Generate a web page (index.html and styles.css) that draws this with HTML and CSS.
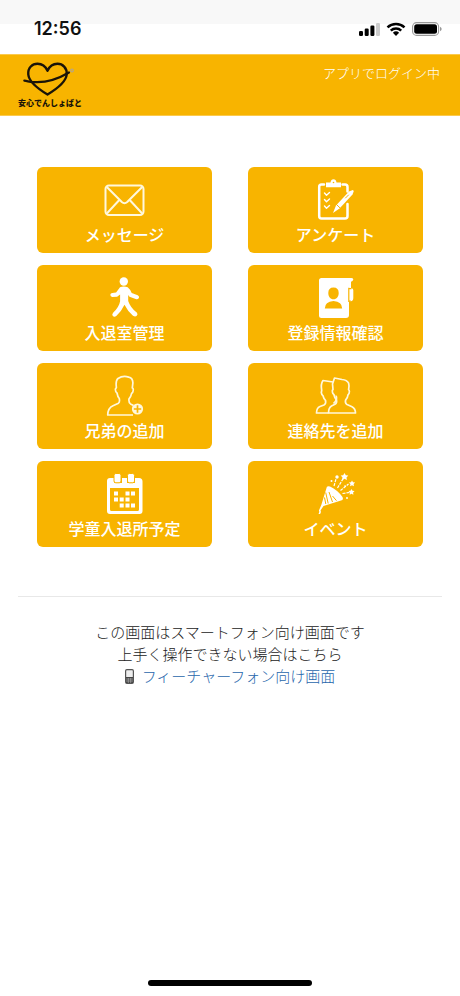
FILE: index.html
```html
<!DOCTYPE html>
<html lang="ja">
<head>
<meta charset="utf-8">
<meta name="viewport" content="width=device-width, initial-scale=1">
<title>安心でんしょばと</title>
<link rel="stylesheet" href="styles.css">
</head>
<body>
<div class="status">
  <time class="clock">12:56</time>
  <div class="indicators">
    <svg width="21" height="14" viewBox="0 0 21 14" aria-hidden="true"><rect y="9" width="4" height="5" rx="1.2"/><rect x="5.7" y="6.5" width="4" height="7.5" rx="1.2"/><rect x="11.4" y="3.5" width="4" height="10.5" rx="1.2"/><rect x="17" y="1" width="4" height="13" rx="1.2" fill="#ccc"/></svg>
    <svg width="20" height="14" viewBox="0 0 20 14" aria-hidden="true"><g fill="none" stroke="#000" stroke-width="2.5"><path d="M1.500 5.300a12.300 12.300 0 0 1 17 0"/><path d="M4.800 8.600a7.500 7.500 0 0 1 10.400 0"/></g><path d="M10 14 6.900 10.800a4.500 4.500 0 0 1 6.200 0z"/></svg>
    <svg width="30" height="14" viewBox="0 0 30 14" aria-hidden="true"><rect x=".6" y=".6" width="26" height="12.8" rx="4" fill="none" stroke="#999" stroke-width="1.1"/><rect x="2.2" y="2.2" width="22.8" height="9.6" rx="2.5"/><path d="M28 4.700q1.700.7 1.700 2.300T28 9.300z" fill="#999"/></svg>
  </div>
</div>
<header class="header">
  <a class="brand" href="#">
    <svg width="52" height="35" viewBox="0 0 52 35" fill="none" stroke="#1a1408" stroke-linecap="round" stroke-linejoin="round" aria-hidden="true"><path stroke-width="2.4" d="M24.500 32.500C14.500 26.500 6 20 5.300 12.500 4.700 5.500 9.500 1.800 14.500 1.800c4.500 0 8 2.600 10 7 2-4.400 5.500-7 10-7 5 0 9.700 3.800 9.200 10.700C43 20 34.500 26.500 24.500 32.500z"/><path stroke-width="2.2" d="M1.300 18.700c4 .4 5 1.400 12 1.500C25 20.400 35 17 46 10.500"/><circle cx="49" cy="8.500" r="1.300" stroke="#b8a682" stroke-width="1.3"/></svg>
    <span class="brand-name">安心でんしょばと</span>
  </a>
  <p class="session">アプリでログイン中</p>
</header>
<main class="main">
  <nav class="menu">
    <a class="tile" href="#">
      <svg class="icon" viewBox="1 0 42 42" fill="none" stroke="#fff8dc" stroke-width="2" stroke-linejoin="round"><rect x="2.5" y="6.500" width="38" height="29.5" rx="3.5"/><path d="M3.800 8l15 15q2.700 2.400 5.400 0l15-15M3.800 34.500 16.300 21M39.200 34.500 26.700 21"/></svg>
      <span>メッセージ</span>
    </a>
    <a class="tile" href="#">
      <svg class="icon" viewBox="2 0 42 42" fill="none" stroke="#fff" stroke-linecap="round" stroke-linejoin="round"><path stroke-width="2.5" d="M11 5.500H8.500Q6.200 5.500 6.200 7.800V37q0 2.500 2.300 2.500h23.500q2.500 0 2.500-2.500V25M29.500 5.500h2.500q2.500 0 2.500 2.500v4.500"/><path fill="#fff" stroke="none" d="M13 3.500h4.500q.5-3.300 3-3.300t3 3.300H28v4.800H13z"/><circle cx="20.500" cy="3.500" r=".8" fill="#f8b400" stroke="none"/><path stroke-width="1.4" d="M11.500 14l2 2.200 3-2.700M11.500 20.500l2 2.200 3-2.700M11.500 27l2 2.200 3-2.700"/><path fill="#fff" stroke="none" d="M20 34l3-7.500L36 12.500l3.800-1.500 1 1-1.300 3.500L26.500 29.500z"/><path stroke="#f8b400" stroke-width="1" d="M23.500 25.500l3.500 3.400M32.500 19l3-3"/></svg>
      <span>アンケート</span>
    </a>
    <a class="tile" href="#">
      <svg class="icon" viewBox="1 0 42 42" fill="#fff"><circle cx="20.800" cy="4.500" r="4.200"/><path d="M17 10.200q3.700-1.500 7.700 0 2.300 1.800 4 5.700l6 2.300q2.200 1.300.8 3.400-1 1-2.800.4l-6.200-2.300-1.300-1.700v6q2.300 7 8.800 11.700 1.200 2-.5 3.300-1.500 1-3.500-.3-5.500-4.700-8.500-11-3 6.500-8.200 11.300-2 1.400-3.500 0-1.200-1.600.3-3.300 6-5.700 7-11.500V17.500l-3 2.200-4.800.2q-2-.5-2-2.200.2-1.600 2-1.800l3.800-.5z"/></svg>
      <span>入退室管理</span>
    </a>
    <a class="tile" href="#">
      <svg class="icon" viewBox="2 0 42 42"><path fill="#fff" d="M8.500 1h30q2 0 1.800 1.500-.5 2-2.300 2.300v6.200q2.300.3 2.300 2v8q0 3-2.500 3.300H36V38q0 3-3 3H8.500Q6 41 6 38.500V3.500Q6 1 8.500 1z"/><path fill="none" stroke="#f8b400" stroke-width="1.2" d="M35.500 11.700h3M35.500 24h2.300M35.800 10.700V25"/><path fill="#f8b400" d="M20.500 10.500q5.200 0 5.200 5.500c0 3.500-2 6.300-5.200 6.300s-5.200-2.800-5.200-6.300q0-5.500 5.200-5.500zM11.800 31.500q0-6.800 8.700-7.500 8.700.7 8.700 7.500z"/></svg>
      <span>登録情報確認</span>
    </a>
    <a class="tile" href="#">
      <svg class="icon" viewBox="1 0 42 42" fill="none" stroke="#fff8dc" stroke-width="1.7" stroke-linejoin="round"><path d="M30 40H4.700q.1-7 5.300-9.300l5.500-2.500q1.500-1.200.8-4.700-1.700-2-2.300-5.500-1.800-1-1.600-4l1-1.500q-1-7 1.600-9 5-3.300 10.700-1.400 4 .8 4.200 5.800l-.6 5q1.400.5.8 3-.2 2-1.500 2.500-.7 3.600-2.600 5.500-.5 3.700 1.500 5l3 1.500"/><circle cx="34.500" cy="34" r="5.600" fill="#fff8dc" stroke="none"/><path stroke="#f8b400" d="M34.500 30.300v7.400M30.800 34h7.400"/></svg>
      <span>兄弟の追加</span>
    </a>
    <a class="tile" href="#">
      <svg class="icon" viewBox="2 0 42 42" fill="none" stroke="#fff8dc" stroke-width="1.7" stroke-linejoin="round"><path d="M20 7 10 5.500Q7.500 9 8.700 15.500l-.4 2q.4 2.500 1.700 3.200.7 3 2.500 4.600.8 3.500-1.500 4.700l-4 1.500Q3.500 33 3.500 38h12M22.500 21q1.200 0 1 2.500-.5 3.300-3 5"/><path d="M15.500 38h27q0-4.500-3.500-6.300l-5.500-2.500q-1.700-1.500-.8-4.400 2-2 2.300-5 1.400-.6 1.400-3.200 0-1.300-.8-2 .8-4 0-6.500Q34 5 29 4.500L21.500 3l-2 6 .5 5.500q-1 .7-.6 2.500.3 2 1.500 2.500.6 3.500 2.500 5 .8 3.200-1 4.600L18.500 31q-3 1.700-3 7z"/></svg>
      <span>連絡先を追加</span>
    </a>
    <a class="tile" href="#">
      <svg class="icon" viewBox="1 0 42 42"><path fill="#fff" fill-rule="evenodd" d="M7 5h4v5h8V5h5v5h8V5h4q3.500 0 3.500 3.500V38q0 3-3 3H7q-3 0-3-3V8q0-3 3-3zM7 15v21.500Q7 38 8.500 38h26q1.500 0 1.500-1.500V15z"/><g fill="#fff" stroke="#f8b400" stroke-width="1"><rect x="11" y=".5" width="7" height="9.3" rx="1.8"/><rect x="24.5" y=".5" width="7" height="9.3" rx="1.8"/></g><path fill="#fff" d="M11 18.500h4v4h-4zM22.500 18.500h4v4h-4zM28 18.500h4v4h-4zM11 24.500h4v4h-4zM16.700 24.500h4v4h-4zM22.500 24.500h4v4h-4zM16.700 30.500h4v4h-4zM22.500 30.500h4v4h-4zM28 30.500h4v4h-4z"/></svg>
      <span>学童入退所予定</span>
    </a>
    <a class="tile" href="#">
      <svg class="icon" viewBox="2 0 42 42"><path fill="#fff" d="M13.500 15q0-2.500 3.500-1.500 7.500 3.500 12.500 10.500 1.300 3-1.500 3.500L10.500 33l-3 4.500q1 1.500-.4 3.500H5.500q1.300-2 .4-3.500l2.400-5.500z"/><path fill="none" stroke="#f8b400" stroke-width="1" d="M12.700 19.500l2.500 11M16 19l3.500 10M19.500 23l4 4.700M11.500 24.500l1.300 6.500"/><path fill="none" stroke="#fff" stroke-width="1.200" stroke-dasharray="3 1" d="M21 13l2-7M24.500 15l6-10M27.500 17.500l8-6.500M29.500 20.500l7-1"/><g fill="#fff"><path d="M31.500 0l1.300 2.200 2.500.4-1.800 1.900.4 2.500-2.400-1.200L29.100 7l.4-2.500-1.800-1.900 2.500-.4zM39 7.500l1 1.800 2.100.3-1.500 1.500.3 2.100-1.900-1-1.900 1 .3-2.100-1.500-1.500 2.100-.3zM38.500 16l1 1.800 2.100.3-1.500 1.500.3 2.100-1.900-1-1.900 1 .3-2.100-1.500-1.500 2.100-.3z"/><circle cx="24" cy="4" r="1.700"/><circle cx="18.500" cy="8" r="1"/><circle cx="34" cy="25" r="1"/><circle cx="32" cy="13" r=".8"/></g></svg>
      <span>イベント</span>
    </a>
  </nav>
  <footer class="notice">
    <p>この画面はスマートフォン向け画面です</p>
    <p>上手く操作できない場合はこちら</p>
    <p class="switch">
      <svg width="9" height="15" viewBox="0 0 9 15" aria-hidden="true"><rect x=".6" y=".6" width="7.8" height="13.8" rx="1.3" fill="#eee" stroke="#555" stroke-width="1.2"/><path fill="#444" d="M1 8h7v6H1z"/><path fill="none" stroke="#bbb" stroke-width=".6" d="M1 10h7M1 12h7M3.300 9v5M5.700 9v5"/></svg>
      <a href="#">フィーチャーフォン向け画面</a>
    </p>
  </footer>
</main>
<div class="home-bar"></div>
</body>
</html>
```
FILE: styles.css
```css
* { box-sizing: border-box; }

body {
  margin: 0;
  min-height: 100vh;
  display: flex;
  flex-direction: column;
  background: #fff;
  color: #222;
  font-family: "Noto Sans CJK JP", sans-serif;
  font-size: 15px;
  font-weight: 300;
  line-height: 22px;
}

p { margin: 0; }
a { color: #1f66ab; text-decoration: none; }

.status {
  display: flex;
  justify-content: space-between;
  height: 54px;
  padding: 18px 18px 0 34px;
  background: linear-gradient(#f8f8f8 24px, #fff 24px);
}

.clock {
  color: #111;
  font: 600 18px/22px Inter, sans-serif;
}

.indicators {
  display: flex;
  gap: 6px;
  padding-top: 4px;
}

.header {
  display: flex;
  justify-content: space-between;
  align-items: flex-start;
  height: 62px;
  padding: 7px 20px 0 18px;
  border-top: 1px solid #fbca4d;
  border-bottom: 1px solid #fbca4d;
  background: #f8b400;
}

.brand {
  display: flex;
  flex-direction: column;
  color: #1a1408;
}

.brand svg { margin-left: 5px; }

.brand-name {
  font-size: 8px;
  font-weight: 900;
  line-height: 12px;
}

.session {
  color: #fff;
  font-size: 13px;
}

.main { padding: 51px 18px 0; }

.menu {
  display: grid;
  grid-template-columns: 1fr 1fr;
  gap: 12px 36px;
  padding: 0 19px 49px;
  border-bottom: 1px solid #e8e8e8;
}

.tile {
  display: flex;
  flex-direction: column;
  align-items: center;
  height: 86px;
  padding-top: 12px;
  border-radius: 6px;
  background: #f8b400;
  color: #fff;
  font-size: 16px;
  font-weight: 500;
  line-height: 24px;
}

.icon {
  width: 42px;
  height: 42px;
  margin-bottom: 1px;
}

.notice {
  padding-top: 24px;
  text-align: center;
}

.switch {
  display: flex;
  justify-content: center;
  align-items: center;
  gap: 8px;
}

.home-bar {
  width: 164px;
  height: 6px;
  margin: auto auto 10px;
  border-radius: 3px;
  background: #000;
}
```
